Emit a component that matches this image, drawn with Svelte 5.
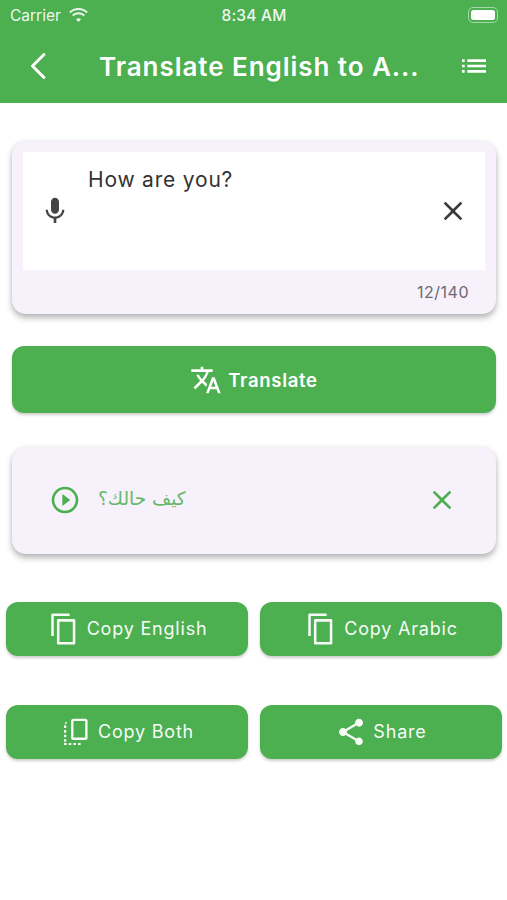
<script>
  const icons = {
    mic: "M12 14c1.66 0 2.99-1.34 2.99-3L15 5c0-1.66-1.34-3-3-3S9 3.34 9 5v6c0 1.66 1.34 3 3 3zm5.3-3c0 3-2.54 5.1-5.3 5.1S6.7 14 6.7 11H5c0 3.41 2.72 6.23 6 6.72V21h2v-3.28c3.28-.48 6-3.3 6-6.72h-1.7z",
    close: "M19 6.41L17.59 5 12 10.59 6.41 5 5 6.41 10.59 12 5 17.59 6.41 19 12 13.41 17.59 19 19 17.59 13.41 12z",
    translate: "M12.87 15.07l-2.54-2.51.03-.03c1.74-1.94 2.98-4.17 3.71-6.53H17V4h-7V2H8v2H1v1.99h11.17C11.5 7.92 10.44 9.75 9 11.35 8.07 10.32 7.3 9.19 6.69 8h-2c.73 1.63 1.73 3.17 2.98 4.56l-5.09 5.02L4 19l5-5 3.11 3.11.76-2.04zM18.5 10h-2L12 22h2l1.12-3h4.75L21 22h2l-4.5-12zm-2.62 7l1.62-4.33L19.12 17h-3.24z",
    play: "M10 16.5l6-4.5-6-4.5v9zM12 2C6.48 2 2 6.48 2 12s4.48 10 10 10 10-4.48 10-10S17.52 2 12 2zm0 18c-4.41 0-8-3.59-8-8s3.59-8 8-8 8 3.59 8 8-3.59 8-8 8z",
    copy: "M16 1H4c-.6 0-1 .4-1 1v15h1.800V2.800H16V1zm3 4H8c-.6 0-1 .4-1 1v16c0 .6.4 1 1 1h11c.6 0 1-.4 1-1V6c0-.6-.4-1-1-1zm-.8 16.200H8.800V6.800h9.400v14.400z",
    both: "M10 2h9c1 0 1.700.7 1.700 1.700v12.600c0 1-.7 1.700-1.700 1.700h-9c-1 0-1.700-.7-1.700-1.700V3.700C8.300 2.700 9 2 10 2zm.1 1.800v12.400h8.800V3.800h-8.800zM3 7h1.700v2H3V7zm0 3.500h1.700v2H3v-2zM3 14h1.700v2H3v-2zm0 3.500h1.700v1.800H3v-1.800zM3 20.200h2v1.600H3v-1.600zm3.500 0h2v1.600h-2v-1.600zm3.500 0h2v1.600h-2v-1.600zm3.500 0h2v1.600h-2v-1.600zM3.600 5.200L5 4v1.800H3.400z",
    share: "M18 16.08c-.76 0-1.44.3-1.96.77L8.91 12.7c.05-.23.09-.46.09-.7s-.04-.47-.09-.7l7.05-4.11c.54.5 1.25.81 2.04.81 1.66 0 3-1.34 3-3s-1.34-3-3-3-3 1.34-3 3c0 .24.04.47.09.7L8.04 9.81C7.5 9.31 6.79 9 6 9c-1.66 0-3 1.34-3 3s1.34 3 3 3c.79 0 1.5-.31 2.04-.81l7.12 4.16c-.05.21-.08.43-.08.65 0 1.61 1.31 2.92 2.92 2.92 1.61 0 2.92-1.31 2.92-2.92s-1.31-2.92-2.92-2.92z",
    list: "M3 13h2v-2H3v2zm0 4h2v-2H3v2zm0-8h2V7H3v2zm4 4h14v-2H7v2zm0 4h14v-2H7v2zM7 7v2h14V7H7z",
  };

  const actions = [
    { label: "Copy English", icon: "copy", size: 34 },
    { label: "Copy Arabic", icon: "copy", size: 34 },
    { label: "Copy Both", icon: "both", size: 32 },
    { label: "Share", icon: "share", size: 32 },
  ];
</script>

{#snippet icon(name, size)}
  <svg width={size} height={size} viewBox="0 0 24 24" fill="currentColor" aria-hidden="true"><path d={icons[name]} /></svg>
{/snippet}

<div class="page">
  <header>
    <div class="status">
      <div class="carrier">
        <span>Carrier</span>
        <svg width="21" height="15" viewBox="0 0 22 16" fill="currentColor" aria-hidden="true">
          <path d="M11 2.2c3.3 0 6.3 1.3 8.6 3.4l1.3-1.5C18.3 1.6 14.8 0 11 0S3.700 1.600 1.100 4.100l1.300 1.500C4.700 3.500 7.700 2.200 11 2.200z" />
          <path d="M11 6.700c2.100 0 4 .8 5.500 2.100l1.400-1.500C16 5.600 13.600 4.600 11 4.600s-5 1-6.900 2.700l1.400 1.500C7 7.500 8.900 6.700 11 6.700z" />
          <path d="M11 11c-1.100 0-2 .4-2.700 1L11 15l2.700-3c-.7-.6-1.600-1-2.700-1z" />
        </svg>
      </div>
      <span class="clock">8:34 AM</span>
      <div class="battery"><i></i></div>
    </div>
    <div class="toolbar">
      <svg class="back" width="18" height="28" viewBox="0 0 18 28" fill="none" stroke="currentColor" stroke-width="3" stroke-linecap="round" stroke-linejoin="round" aria-hidden="true"><path d="M15 2.500L3.500 14 15 25.500" /></svg>
      <h1>Translate English to A...</h1>
      <span class="menu">{@render icon("list", 32)}</span>
    </div>
  </header>

  <section class="card input-card">
    <div class="field">
      <span class="mic">{@render icon("mic", 32)}</span>
      <p>How are you?</p>
      <span class="clear">{@render icon("close", 32)}</span>
    </div>
    <div class="counter">12/140</div>
  </section>

  <button class="btn translate">{@render icon("translate", 32)}<span>Translate</span></button>

  <section class="card result">
    <span class="play">{@render icon("play", 32)}</span>
    <p dir="rtl">كيف حالك؟</p>
    <span class="dismiss">{@render icon("close", 32)}</span>
  </section>

  <div class="actions">
    {#each actions as a}
      <button class="btn action">{@render icon(a.icon, a.size)}<span>{a.label}</span></button>
    {/each}
  </div>
</div>

<style>
  :global(body) { background: #fff; }
  .page { width: 507px; height: 900px; overflow: hidden; background: #fff; font-family: Inter, Roboto, "Liberation Sans", sans-serif; }

  header { background: #4caf50; color: #fff; height: 103px; }
  .status { height: 30px; display: grid; grid-template-columns: 1fr auto 1fr; align-items: center; padding: 0 9px 0 10px; color: #eef7ee; }
  .carrier { display: flex; align-items: center; gap: 7px; font-size: 15.5px; }
  .clock { font-size: 15.5px; font-weight: 500; letter-spacing: 0.2px; }
  .battery { position: relative; justify-self: end; width: 30px; height: 16px; box-sizing: border-box; border: 1px solid #a5d7a7; border-radius: 5px; padding: 2px; }
  .battery i { display: block; height: 100%; background: #fff; border-radius: 2.500px; }

  .toolbar { height: 72px; display: flex; align-items: center; padding: 0 20px 0 29px; }
  .back { flex: none; }
  h1 { margin: 0 0 0 52px; flex: 1; font-size: 26px; font-weight: 600; letter-spacing: 0.95px; white-space: nowrap; }
  .menu { display: flex; margin-right: -3px; }

  .card { background: #f6f1fa; border-radius: 14px; box-shadow: 0 4px 6px rgba(0,0,0,0.28), 0 0 4px rgba(0,0,0,0.06); margin: 0 11px 0 12px; }
  .input-card { margin-top: 38px; padding: 11px 11px 0; height: 173px; box-sizing: border-box; }
  .field { position: relative; background: #fff; height: 118px; display: flex; align-items: center; color: #3a3a3c; }
  .field p { position: absolute; left: 65px; top: 15px; margin: 0; font-size: 21px; line-height: 26px; letter-spacing: 0.8px; color: #333; font-weight: 400; }
  .mic { display: flex; margin-left: 16px; color: #444; }
  .clear { display: flex; margin-left: auto; margin-right: 16px; }
  .counter { text-align: right; font-size: 16px; letter-spacing: 0.5px; color: #6d6a72; margin-top: 12px; padding-right: 16px; }

  .btn { display: flex; align-items: center; justify-content: center; border: 0; background: #4caf50; color: #fff; font-family: inherit; cursor: pointer; box-shadow: 0 2px 3px rgba(0,0,0,0.2); padding: 0; }
  .translate { width: 484px; height: 67px; margin: 32px 0 0 12px; border-radius: 12px; gap: 6px; font-size: 18.5px; font-weight: 600; letter-spacing: 0.7px; }

  .result { margin-top: 34px; height: 107px; display: flex; align-items: center; color: #4caf50; }
  .play { display: flex; margin-left: 37px; margin-top: -2px; }
  .result p { margin: -4px 0 0 17px; font-family: "DejaVu Sans", sans-serif; font-size: 18.5px; font-weight: 400; opacity: 0.85; }
  .dismiss { display: flex; margin-left: auto; margin-right: 38px; margin-top: -2px; }

  .actions { display: grid; grid-template-columns: 242px 242px; column-gap: 12px; row-gap: 49px; margin: 48px 0 0 6px; }
  .action { height: 54px; border-radius: 12px; gap: 6px; font-size: 18px; font-weight: 400; letter-spacing: 0.8px; color: #f6fbf6; }
  .action span { margin-top: -1px; }
</style>
